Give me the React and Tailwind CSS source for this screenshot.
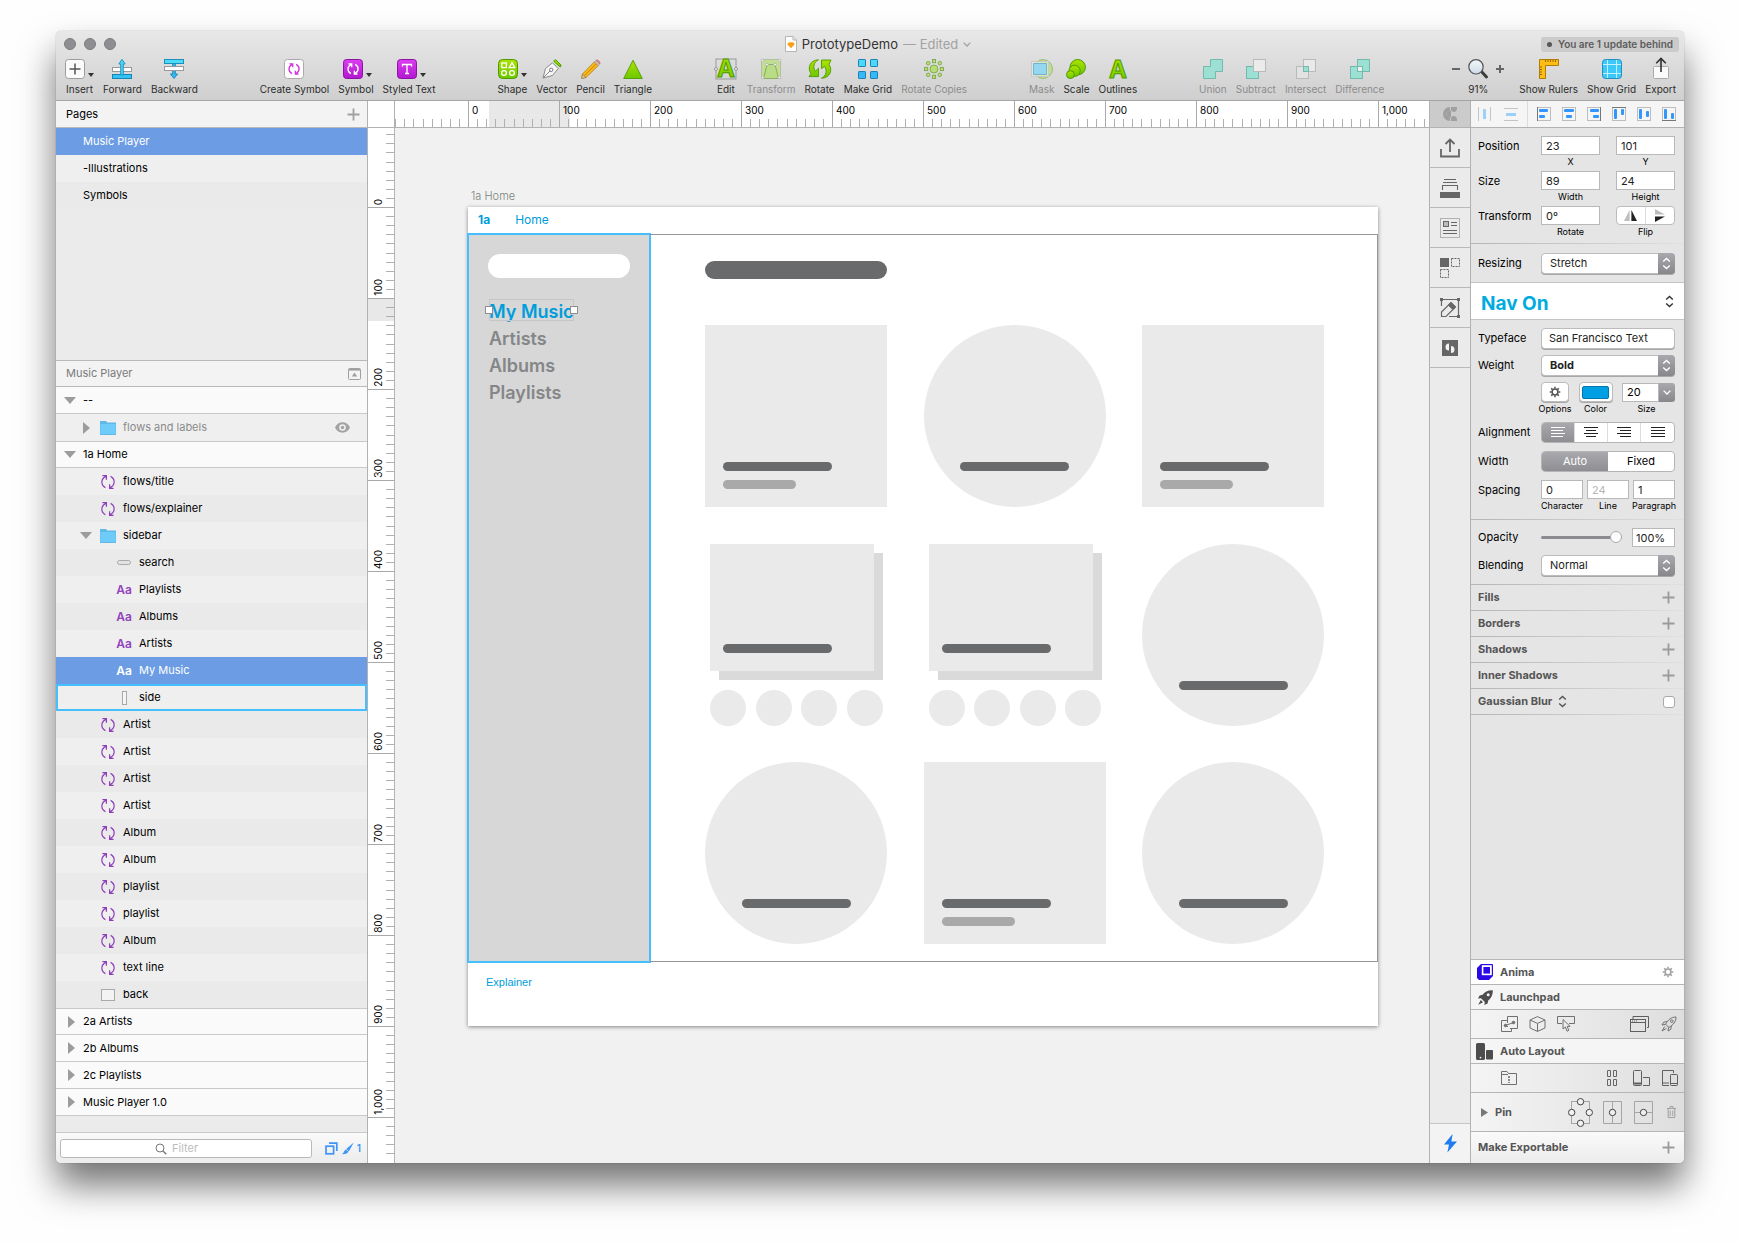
import React from "react";

/* ---------- small shared drawings ---------- */

function Cycle({ size = 14, color = "#8e3fb8", width = 1.2 }) {
  return (
    <svg width={size} height={size} viewBox="0 0 14 14" fill="none" stroke={color} strokeWidth={width} aria-hidden="true">
      <path d="M4.4 12.6C-.4 10 -.4 4 4.8 1.4M1.4 .7H5.4V4.8" />
      <path d="M9.6 1.4C14.4 4 14.4 10 9.2 12.6M12.6 13.3H8.6V9.2" />
    </svg>
  );
}

function Plus({ color = "#9b9b9b", size = 13 }) {
  return (
    <svg width={size} height={size} viewBox="0 0 13 13" aria-hidden="true">
      <path d="M6.5 .5V12.5M.5 6.5H12.5" stroke={color} strokeWidth="1.8" />
    </svg>
  );
}

function UpDown({ color = "#fff" }) {
  return (
    <svg width="9" height="13" viewBox="0 0 9 13" fill="none" stroke={color} strokeWidth="1.4" aria-hidden="true">
      <path d="M1.2 4.6L4.5 1.4L7.8 4.6M1.2 8.4L4.5 11.6L7.8 8.4" />
    </svg>
  );
}

function Gear({ color, size = 13 }) {
  return (
    <svg width={size} height={size} viewBox="0 0 14 14" fill="none" stroke={color} aria-hidden="true">
      <circle cx="7" cy="7" r="3.4" strokeWidth="1.8" />
      <path strokeWidth="1.8" d="M7 .8V3M7 11V13.2M.8 7H3M11 7H13.2M2.6 2.6L4.2 4.2M9.8 9.8L11.4 11.4M11.4 2.6L9.8 4.2M4.2 9.8L2.6 11.4" />
    </svg>
  );
}

function Svg({ children, w = 20, h = 20 }) {
  return (
    <svg width={w} height={h} viewBox={`0 0 ${w} ${h}`} className="shrink-0 overflow-visible" fill="none" aria-hidden="true">
      {children}
    </svg>
  );
}

/* ---------- toolbar icons ---------- */

const G = "url(#lime)";
const GS = "#4f9a00";

const insertIcon = (
  <Svg>
    <rect x=".5" y=".5" width="19" height="19" rx="3" fill="#fbfbfb" stroke="#9c9c9c" />
    <path d="M10 4.5V15.5M4.5 10H15.5" stroke="#555" strokeWidth="1.5" />
  </Svg>
);
const forwardIcon = (
  <Svg>
    <rect x=".5" y="8.5" width="19" height="4" fill="#fff" stroke="#999" />
    <rect x=".5" y="15.5" width="19" height="4" fill="#33c3f5" stroke="#1585b5" />
    <path d="M10 .3L13.2 5H11.3V16H8.7V5H6.8Z" fill="#4ad4f8" stroke="#1d8fbd" strokeWidth=".9" />
  </Svg>
);
const backwardIcon = (
  <Svg>
    <path d="M8.7 4V15H6.4L10 19.5L13.6 15H11.3V4Z" fill="#33b9f2" stroke="#1585b5" strokeWidth=".9" />
    <rect x=".5" y=".5" width="19" height="4" fill="#4adcf8" stroke="#1d8fbd" />
    <rect x=".5" y="7.5" width="19" height="4" fill="#fff" stroke="#999" />
  </Svg>
);
const symbolGlyph = (c) => (
  <g transform="translate(4.3 4.3) scale(.82)" stroke={c} strokeWidth="1.6">
    <path d="M4.4 12.6C-.4 10 -.4 4 4.8 1.4M1.4 .7H5.4V4.8" />
    <path d="M9.6 1.4C14.4 4 14.4 10 9.2 12.6M12.6 13.3H8.6V9.2" />
  </g>
);
const createSymbolIcon = (
  <Svg>
    <rect x=".5" y=".5" width="19" height="19" rx="3" fill="#fff" stroke="#aaa" />
    {symbolGlyph("#d333e0")}
  </Svg>
);
const symbolIcon = (
  <Svg>
    <rect x=".5" y=".5" width="19" height="19" rx="3" fill="url(#magenta)" stroke="#8d12a3" />
    {symbolGlyph("#fff")}
  </Svg>
);
const styledTextIcon = (
  <Svg>
    <rect x=".5" y=".5" width="19" height="19" rx="3" fill="url(#magenta)" stroke="#8d12a3" />
    <path d="M5.5 7.5V5.5H14.5V7.5M10 5.5V14.5M8 14.5H12" stroke="#fff" strokeWidth="1.3" />
  </Svg>
);
const shapeIcon = (
  <Svg>
    <rect x=".5" y=".5" width="19" height="19" rx="4" fill={G} stroke={GS} />
    <g stroke="#fff" strokeWidth="1.3">
      <rect x="3.8" y="4" width="4.6" height="4.6" />
      <path d="M14 3.6L16.8 8.6H11.2Z" />
      <circle cx="6" cy="14" r="2.4" />
      <circle cx="14" cy="14" r="2.4" />
    </g>
  </Svg>
);
const vectorIcon = (
  <Svg>
    <path d="M1 19L3.5 9.5L10.5 3.8L16.2 9.5L10.5 16.5Z" fill="#f6f6f6" stroke="#8a8a8a" />
    <path d="M1 19L8.3 11.7" stroke="#8a8a8a" />
    <circle cx="9.2" cy="10.8" r="1.7" fill="#fff" stroke="#777" />
    <path d="M12 1.6L13.8 .8L19.2 6.2L18.2 8L12 2.6Z" fill={G} stroke={GS} />
  </Svg>
);
const pencilIcon = (
  <Svg>
    <path d="M1.5 15L13.5 2.8L17.2 6.5L5 18.5L.8 19.2Z" fill="#fbbd1c" stroke="#a8770e" strokeWidth=".8" />
    <path d="M3.4 16.6L15.4 4.6" stroke="#d98f06" strokeWidth="1.2" />
    <path d="M1.4 15.2L5 18.5L.6 19.4Z" fill="#e9c79a" stroke="#8a6a3a" strokeWidth=".6" />
    <path d="M13.5 2.8L15 1.3L18.7 5L17.2 6.5Z" fill="#c9c9c9" stroke="#888" strokeWidth=".5" />
    <path d="M15 1.3C16.5 -.2 20.2 3.2 18.7 5Z" fill="#f08b8b" stroke="#b56262" strokeWidth=".6" />
  </Svg>
);
const triangleIcon = (
  <Svg>
    <path d="M10 1.2L19.3 19.5H.7Z" fill={G} stroke={GS} strokeWidth=".9" />
  </Svg>
);
function LetterA({ x = 10 }) {
  return (
    <text x={x} y="19" textAnchor="middle" fontFamily="Inter, sans-serif" fontWeight="700" fontSize="24" fill={G} stroke={GS} strokeWidth="1">
      A
    </text>
  );
}
const editIcon = (
  <Svg w={24} h={22}>
    <rect x="2" y="1" width="20" height="20" stroke="#9a9a9a" />
    <LetterA x={12} />
    <circle cx="2" cy="11" r="1.5" fill="#eee" stroke="#999" />
    <circle cx="22" cy="11" r="1.5" fill="#eee" stroke="#999" />
  </Svg>
);
const transformIcon = (
  <Svg>
    <rect x=".5" y=".5" width="19" height="19" fill="#c0df92" stroke="#b5bfa6" />
    <path d="M6 5.5H14L17.5 19.5H2.5Z" fill="#b9dd84" stroke="#8fac63" />
    <g fill="#f4f4f4" stroke="#b0b0b0" strokeWidth=".8">
      <circle cx="1.4" cy="1.4" r="1.3" />
      <circle cx="18.6" cy="1.4" r="1.3" />
      <circle cx="6" cy="5.5" r="1.3" />
      <circle cx="14" cy="5.5" r="1.3" />
      <circle cx="1.6" cy="18.6" r="1.3" />
      <circle cx="18.4" cy="18.6" r="1.3" />
    </g>
  </Svg>
);
const rotateIcon = (
  <Svg w={24} h={20}>
    <path d="M10.5 .8C2 1 -1 9 3 14.6L1 17.6H10.5V9.2L7.4 12.2C4.6 8.5 5.6 3 10.5 .8Z" fill={G} stroke={GS} strokeWidth=".9" />
    <path d="M13.5 19.2C22 19 25 11 21 5.4L23 1H13.5V9.6L16.6 7.4C19.4 11.5 18.4 17 13.5 19.2Z" fill={G} stroke={GS} strokeWidth=".9" />
  </Svg>
);
const makeGridIcon = (
  <Svg>
    {[[0, 0], [12, 0], [0, 12], [12, 12]].map(([x, y]) => (
      <rect key={`${x}-${y}`} x={x + 0.5} y={y + 0.5} width="7" height="7" rx=".6" fill={y ? "#35b8f5" : "#4cd8fa"} stroke="#1b82b3" />
    ))}
  </Svg>
);
const rotateCopiesIcon = (
  <Svg>
    <g fill="#b5de74" stroke="#7fa64a" strokeWidth=".9">
      <circle cx="10" cy="10" r="4" />
      <rect x="8.4" y=".5" width="3.2" height="3.2" />
      <rect x="8.4" y="16.3" width="3.2" height="3.2" />
      <rect x=".5" y="8.4" width="3.2" height="3.2" />
      <rect x="16.3" y="8.4" width="3.2" height="3.2" />
      <circle cx="4.2" cy="4.2" r="1.8" />
      <circle cx="15.8" cy="4.2" r="1.8" />
      <circle cx="4.2" cy="15.8" r="1.8" />
      <circle cx="15.8" cy="15.8" r="1.8" />
    </g>
  </Svg>
);
const maskIcon = (
  <Svg w={22} h={20}>
    <circle cx="12" cy="10" r="9.4" fill="#bfe08c" stroke="#9dbb72" />
    <rect x=".5" y="2.5" width="17" height="15" stroke="#c9c9c9" fill="#f0f0f0" fillOpacity=".5" />
    <rect x="2.5" y="4.5" width="13" height="11" fill="#93d8f0" stroke="#74b4cf" />
  </Svg>
);
const scaleIcon = (
  <Svg>
    <g fill={G} stroke={GS}>
      <circle cx="11.7" cy="8.2" r="7.7" />
      <circle cx="8.6" cy="11.8" r="5.6" />
      <circle cx="4.4" cy="15.6" r="3.9" />
    </g>
  </Svg>
);
const outlinesIcon = (
  <Svg>
    <LetterA />
  </Svg>
);
const M = "#9be0d3";
const MS = "#74b9ac";
const unionIcon = (
  <Svg>
    <path d="M7.5 .5H19.5V12.5H12.5V19.5H.5V7.5H7.5Z" fill={M} stroke={MS} />
  </Svg>
);
const subtractIcon = (
  <Svg>
    <rect x=".5" y="7.5" width="12" height="12" fill={M} stroke={MS} />
    <rect x="7.5" y=".5" width="12" height="12" fill="#ebebeb" stroke="#bababa" />
  </Svg>
);
const intersectIcon = (
  <Svg>
    <rect x="7.5" y=".5" width="12" height="12" fill="#e9e9e9" stroke="#bababa" />
    <rect x=".5" y="7.5" width="12" height="12" fill="#e2e2e2" stroke="#bababa" />
    <rect x="7.5" y="7.5" width="5" height="5" fill={M} stroke={MS} />
  </Svg>
);
const differenceIcon = (
  <Svg>
    <rect x="7.5" y=".5" width="12" height="12" fill={M} stroke={MS} />
    <rect x=".5" y="7.5" width="12" height="12" fill={M} stroke={MS} />
    <rect x="7.5" y="7.5" width="5" height="5" fill="#e9f3f1" stroke={MS} />
  </Svg>
);
const zoomIcon = (
  <Svg w={52} h={20}>
    <path d="M0 10H8M44 10H52M48 6V14" stroke="#666" strokeWidth="2" />
    <path d="M29 12L34.5 18" stroke="#3c3c3c" strokeWidth="3" strokeLinecap="round" />
    <circle cx="24" cy="7.8" r="7.2" fill="url(#lens)" stroke="#555" strokeWidth="1.2" />
  </Svg>
);
const rulersIcon = (
  <Svg>
    <path d="M.5 .5H19.5V6.5H6.5V19.5H.5Z" fill="#fdbd12" stroke="#b07c08" />
    <path d="M6.5 1V3M9 1V3M11.5 1V3M14 1V3M16.5 1V3M1 8H3M1 10.5H3M1 13H3M1 15.5H3" stroke="#8a5f00" strokeWidth=".9" />
  </Svg>
);
const showGridIcon = (
  <Svg>
    <rect x=".5" y=".5" width="19" height="19" rx="3" fill="#3cc8f8" stroke="#2391bf" />
    <path d="M5.5 1V19M14.5 1V19M1 5.5H19M1 14.5H19" stroke="#c4f0ff" />
  </Svg>
);
const exportIcon = (
  <Svg w={20} h={22}>
    <rect x="2.5" y="8.5" width="15" height="12" rx="1" fill="#fafafa" stroke="#aaa" />
    <path d="M10 14V1M5.2 5.2L10 .4L14.8 5.2" stroke="#333" strokeWidth="1.6" />
  </Svg>
);

const toolGroups = [
  [
    { label: "Insert", icon: insertIcon, menu: true },
    { label: "Forward", icon: forwardIcon },
    { label: "Backward", icon: backwardIcon },
  ],
  [
    { label: "Create Symbol", icon: createSymbolIcon },
    { label: "Symbol", icon: symbolIcon, menu: true },
    { label: "Styled Text", icon: styledTextIcon, menu: true },
  ],
  [
    { label: "Shape", icon: shapeIcon, menu: true },
    { label: "Vector", icon: vectorIcon },
    { label: "Pencil", icon: pencilIcon },
    { label: "Triangle", icon: triangleIcon },
  ],
  [
    { label: "Edit", icon: editIcon },
    { label: "Transform", icon: transformIcon, off: true },
    { label: "Rotate", icon: rotateIcon },
    { label: "Make Grid", icon: makeGridIcon },
    { label: "Rotate Copies", icon: rotateCopiesIcon, off: true },
  ],
  [
    { label: "Mask", icon: maskIcon, off: true },
    { label: "Scale", icon: scaleIcon },
    { label: "Outlines", icon: outlinesIcon },
  ],
  [
    { label: "Union", icon: unionIcon, off: true },
    { label: "Subtract", icon: subtractIcon, off: true },
    { label: "Intersect", icon: intersectIcon, off: true },
    { label: "Difference", icon: differenceIcon, off: true },
  ],
  [
    { label: "91%", icon: zoomIcon },
    { label: "Show Rulers", icon: rulersIcon, gap: true },
    { label: "Show Grid", icon: showGridIcon },
    { label: "Export", icon: exportIcon },
  ],
];

function Tool({ label, icon, menu, off, gap }) {
  return (
    <button type="button" disabled={off} className={`flex flex-col items-center ${gap ? "ml-[6px]" : ""} ${off ? "text-[#8c8c8c]" : "text-[#2c2c2c]"}`}>
      <span className={`flex h-5 items-center gap-[3px] ${menu && label !== "Insert" && label !== "Shape" ? "pl-1" : ""}`}>
        {icon}
        {menu && (
          <svg width="6" height="4" viewBox="0 0 6 4" className="mt-3" aria-hidden="true">
            <path d="M0 0H6L3 4Z" fill="#333" />
          </svg>
        )}
      </span>
      <span className="mt-[3px] whitespace-nowrap text-[10px] leading-[14px]">{label}</span>
    </button>
  );
}

function Toolbar() {
  return (
    <header className="border-b border-[#a5a5a5] bg-linear-to-b from-[#e8e8e8] to-[#cfcfcf]">
      <div className="grid h-[26px] grid-cols-[1fr_auto_1fr] items-center px-[5px]">
        <div className="flex gap-2 pl-[3px]">
          {["Close", "Minimise", "Zoom"].map((n) => (
            <button key={n} type="button" aria-label={n} className="size-3 rounded-full border border-[#7d7d80] bg-[#8e8e92]" />
          ))}
        </div>
        <h1 className="flex items-center gap-[5px] pl-4 text-[13px] leading-4 text-[#333]">
          <svg width="12" height="16" viewBox="0 0 12 16" aria-hidden="true">
            <path d="M.5 .5H8L11.5 4V15.5H.5Z" fill="#fff" stroke="#b5b5b5" />
            <path d="M8 .5V4H11.5" fill="#e5e5e5" stroke="#b5b5b5" />
            <path d="M3.8 6.2H8.2L9.8 8.2L6 12.2L2.2 8.2Z" fill="#f9a01b" />
          </svg>
          <span>PrototypeDemo</span>
          <span className="text-[#a2a2a2]">— Edited</span>
          <svg width="8" height="5" viewBox="0 0 8 5" fill="none" stroke="#a2a2a2" strokeWidth="1.3" aria-hidden="true">
            <path d="M.6 .6L4 4L7.4 .6" />
          </svg>
        </h1>
        <div className="flex justify-end">
          <span className="flex items-center gap-[6px] rounded-[3px] bg-[#cbcbcb] px-[6px] text-[10px] font-semibold leading-[15px] text-[#5c5c5c]">
            <i className="size-[5px] rounded-full bg-[#565656]" />
            You are 1 update behind
          </span>
        </div>
      </div>
      <div className="flex justify-between pb-1 pl-[9px] pr-2 pt-[2px]">
        {toolGroups.map((g, i) => (
          <div key={i} className={`flex gap-[9px] ${i === 6 ? "ml-[6px]" : ""}`}>
            {g.map((t) => (
              <Tool key={t.label} {...t} />
            ))}
          </div>
        ))}
      </div>
    </header>
  );
}

/* ---------- left panel ---------- */

const layers = [
  { t: "--", k: "board", open: true },
  { t: "flows and labels", k: "folder", open: false, muted: true, eye: true },
  { t: "1a Home", k: "board", open: true },
  { t: "flows/title", k: "symbol" },
  { t: "flows/explainer", k: "symbol" },
  { t: "sidebar", k: "folder", open: true },
  { t: "search", k: "pill" },
  { t: "Playlists", k: "text" },
  { t: "Albums", k: "text" },
  { t: "Artists", k: "text" },
  { t: "My Music", k: "text", selected: true },
  { t: "side", k: "bar", hover: true },
  { t: "Artist", k: "symbol" },
  { t: "Artist", k: "symbol" },
  { t: "Artist", k: "symbol" },
  { t: "Artist", k: "symbol" },
  { t: "Album", k: "symbol" },
  { t: "Album", k: "symbol" },
  { t: "playlist", k: "symbol" },
  { t: "playlist", k: "symbol" },
  { t: "Album", k: "symbol" },
  { t: "text line", k: "symbol" },
  { t: "back", k: "rect" },
  { t: "2a Artists", k: "board", open: false },
  { t: "2b Albums", k: "board", open: false },
  { t: "2c Playlists", k: "board", open: false },
  { t: "Music Player 1.0", k: "board", open: false },
];

function Disclosure({ open }) {
  return open ? (
    <svg width="12" height="7" viewBox="0 0 12 7" aria-hidden="true">
      <path d="M0 0H12L6 7Z" fill="#9c9c9c" />
    </svg>
  ) : (
    <svg width="7" height="12" viewBox="0 0 7 12" aria-hidden="true">
      <path d="M0 0L7 6L0 12Z" fill="#9c9c9c" />
    </svg>
  );
}

function LayerIcon({ k, selected }) {
  if (k === "symbol") return <Cycle />;
  if (k === "text")
    return <span className={`text-[12px] font-semibold ${selected ? "text-white" : "text-[#9243bd]"}`}>Aa</span>;
  if (k === "folder")
    return (
      <svg width="16" height="14" viewBox="0 0 16 14" aria-hidden="true">
        <path d="M0 0H6L7 1.6H16V14H0Z" fill="#5fb9e8" />
        <path d="M.5 3H15.5V13H.5Z" fill="#6ecbfa" />
      </svg>
    );
  if (k === "pill") return <i className="h-[5px] w-[14px] rounded-full border border-[#a9a9a9] bg-[#e2e2e2]" />;
  if (k === "bar") return <i className="h-[14px] w-[5px] border border-[#a9a9a9] bg-[#f5f5f5]" />;
  return <i className="h-3 w-[14px] border border-[#a9a9a9] bg-[#f3f3f3]" />;
}

function LayerRow({ layer, index }) {
  const { t, k, open, muted, eye, selected, hover } = layer;
  const board = k === "board";
  const deep = k === "text" || k === "pill" || k === "bar";
  let look = index % 2 ? "bg-[#efefef]" : "bg-[#eaeaea]";
  if (board) look = index === 0 || index > 23 ? "bg-[#fafafa] border-b border-[#c9c9c9]" : "bg-[#fafafa] border-y border-[#c9c9c9]";
  if (selected) look = "bg-[#6b9ce4] text-white";
  if (hover) look = "bg-[#efefef] outline-2 -outline-offset-2 outline-[#46bfff]";
  return (
    <li>
      <button type="button" className={`flex h-[27px] w-full items-center text-left text-[11px] ${look} ${muted ? "text-[#8b8b8b]" : ""}`}>
        {board ? (
          <span className={`flex w-[27px] justify-center ${open ? "" : "pl-[3px]"}`}>
            <Disclosure open={open} />
          </span>
        ) : (
          <>
            <span className={`flex justify-end ${open ? "pr-[6px]" : "pr-2"} ${deep ? "w-[58px]" : "w-[42px]"}`}>
              {k === "folder" && <Disclosure open={open} />}
            </span>
            <span className="mr-[5px] flex w-5 justify-center">
              <LayerIcon k={k} selected={selected} />
            </span>
          </>
        )}
        <span className="grow">{t}</span>
        {eye && (
          <svg width="15" height="11" viewBox="0 0 15 11" className="mr-[17px]" aria-hidden="true">
            <path d="M0 5.5C3-1.4 12-1.4 15 5.5C12 12.4 3 12.4 0 5.5Z" fill="#a3a3a3" />
            <circle cx="7.5" cy="5.5" r="3.3" fill="#efefef" />
            <circle cx="7.5" cy="5.5" r="1.7" fill="#a3a3a3" />
          </svg>
        )}
      </button>
    </li>
  );
}

function LeftPanel() {
  return (
    <aside className="flex w-[312px] shrink-0 flex-col border-r border-[#b2b2b2] bg-[#ebebeb] text-[11px] text-black">
      <div className="flex h-[27px] items-center justify-between border-b border-[#b9b9b9] bg-[#f3f3f3] pl-[10px] pr-[7px]">
        <h2>Pages</h2>
        <button type="button" aria-label="Add page">
          <Plus color="#a0a0a0" />
        </button>
      </div>
      <ul className="h-[232px]">
        <li>
          <button type="button" className="h-[27px] w-full bg-[#6b9ce4] pl-[27px] text-left text-white">Music Player</button>
        </li>
        <li>
          <button type="button" className="h-[27px] w-full bg-[#efefef] pl-[27px] text-left">-Illustrations</button>
        </li>
        <li>
          <button type="button" className="h-[27px] w-full bg-[#eaeaea] pl-[27px] text-left">Symbols</button>
        </li>
      </ul>
      <div className="flex h-[27px] items-center justify-between border-y border-[#b9b9b9] bg-[#f3f3f3] pl-[10px] pr-[6px] text-[#7a7a7a]">
        <h2>Music Player</h2>
        <button type="button" aria-label="Collapse layers">
          <svg width="13" height="12" viewBox="0 0 13 12" fill="none" aria-hidden="true">
            <rect x=".5" y=".5" width="12" height="11" rx="1" stroke="#a0a0a0" />
            <path d="M1 1.8H12" stroke="#a0a0a0" strokeWidth="1.6" />
            <path d="M6.5 4.6L9.2 8.6H3.8Z" fill="#a0a0a0" />
          </svg>
        </button>
      </div>
      <ul className="pb-4">
        {layers.map((l, i) => (
          <LayerRow key={i} layer={l} index={i} />
        ))}
      </ul>
      <div className="mt-auto flex h-[31px] items-center border-t border-[#c9c9c9] bg-linear-to-b from-[#fafafa] to-[#ececec] pl-1 pr-[6px]">
        <label className="relative block w-[252px]">
          <span className="sr-only">Filter layers</span>
          <svg width="12" height="12" viewBox="0 0 12 12" fill="none" stroke="#777" className="absolute left-[95px] top-1" aria-hidden="true">
            <circle cx="5" cy="5" r="4" />
            <path d="M8 8L11.3 11.3" strokeWidth="1.4" />
          </svg>
          <input type="text" placeholder="Filter" className="h-[19px] w-full rounded-[3px] border border-[#b9b9b9] bg-white pl-[111px] text-[11px] placeholder:text-[#bdbdbd]" />
        </label>
        <div className="ml-auto flex items-center gap-1 text-[#3f94f7]">
          <button type="button" aria-label="Show slices">
            <svg width="13" height="13" viewBox="0 0 13 13" fill="none" stroke="#3f94f7" strokeWidth="1.7" aria-hidden="true">
              <rect x="1" y="4.2" width="7.6" height="7.6" />
              <path d="M4 1.2H11.8V9" />
            </svg>
          </button>
          <button type="button" aria-label="Show pixels" className="flex items-center gap-[3px] text-[10px] font-semibold">
            <svg width="12" height="13" viewBox="0 0 12 13" aria-hidden="true">
              <path d="M11.8 .4L4.2 7L6.8 9.4ZM3.8 7.4L6.4 9.8C5 12 2.4 12.4 0 12.2C1.8 11.2 2 8.4 3.8 7.4Z" fill="#3f94f7" />
            </svg>
            1
          </button>
        </div>
      </div>
    </aside>
  );
}

/* ---------- rulers ---------- */

const steps = [1, 2, 3, 4, 5, 6, 7, 8, 9];
const marks = ["0", "100", "200", "300", "400", "500", "600", "700", "800", "900", "1,000"];

function HSegment({ label }) {
  return (
    <div className="relative flex h-[26px] w-[91px] shrink-0 flex-col justify-between border-l border-[#a9a9a9] pl-[3px] pt-[2px]">
      <span className="text-[10px] leading-[14px] text-black">{label}</span>
      <svg width="91" height="8" className="absolute -left-px bottom-0" aria-hidden="true">
        {steps.map((s) => (
          <rect key={s} x={Math.round(s * 9.1)} y="0" width="1" height="8" fill="#b0b0b0" />
        ))}
      </svg>
    </div>
  );
}

function VSegment({ label }) {
  return (
    <div className="relative flex h-[91px] w-[26px] shrink-0 flex-col justify-end border-b border-[#a9a9a9] pb-[2px] pl-[3px]">
      <span className="w-[14px] rotate-180 text-[10px] leading-[14px] text-black [writing-mode:vertical-rl]">{label}</span>
      <svg width="8" height="91" className="absolute -bottom-px right-0" aria-hidden="true">
        {steps.map((s) => (
          <rect key={s} x="0" y={Math.round(s * 9.1) - 1} width="8" height="1" fill="#b0b0b0" />
        ))}
      </svg>
    </div>
  );
}

function TopRuler() {
  return (
    <div className="flex h-[27px] shrink-0 border-b border-[#b2b2b2] bg-white">
      <div className="w-[27px] shrink-0 border-r border-[#b2b2b2]" />
      <div className="relative flex min-w-0 grow overflow-hidden">
        <div className="absolute left-[94px] top-0 h-full w-[81px] bg-[#e8e8e8]" />
        <div className="flex w-[73px] shrink-0 justify-end overflow-hidden">
          <HSegment />
        </div>
        {marks.map((m) => (
          <HSegment key={m} label={m} />
        ))}
      </div>
    </div>
  );
}

function SideRuler() {
  return (
    <div className="relative w-[27px] shrink-0 border-r border-[#b2b2b2] bg-white">
      <div className="absolute inset-0 flex flex-col overflow-hidden">
        <div className="absolute left-0 top-[171px] h-[22px] w-full bg-[#e8e8e8]" />
        <div className="flex h-20 shrink-0 flex-col justify-end overflow-hidden">
          <VSegment label="0" />
        </div>
        {marks.slice(1).map((m) => (
          <VSegment key={m} label={m} />
        ))}
        <VSegment />
      </div>
    </div>
  );
}

/* ---------- artboard ---------- */

const Line = () => <div className="h-[9px] w-[109px] rounded-full bg-[#696a6c]" />;

function AlbumCard() {
  return (
    <div className="flex size-[182px] flex-col justify-end gap-[9px] bg-[#eaeaea] p-[18px]">
      <Line />
      <div className="h-[9px] w-[73px] rounded-full bg-[#a9a9a9]" />
    </div>
  );
}

function ArtistCard() {
  return (
    <div className="flex size-[182px] flex-col items-center justify-end rounded-full bg-[#eaeaea] pb-9">
      <Line />
    </div>
  );
}

function PlaylistCard() {
  return (
    <div className="flex size-[182px] flex-col justify-between pl-[5px] pr-1">
      <div className="relative h-[136px]">
        <div className="absolute bottom-0 right-0 h-[127px] w-[164px] bg-[#dadada]" />
        <div className="absolute left-0 top-0 flex h-[127px] w-[164px] items-end bg-[#eaeaea] pb-[18px] pl-[13px]">
          <Line />
        </div>
      </div>
      <div className="flex justify-between">
        {[0, 1, 2, 3].map((i) => (
          <div key={i} className="size-9 rounded-full bg-[#eaeaea]" />
        ))}
      </div>
    </div>
  );
}

function Canvas() {
  return (
    <main className="min-w-0 grow overflow-hidden bg-[#f1f1f1] pl-[73px] pt-[59px]">
      <p className="pb-px pl-[3px] text-[11px] font-light leading-[19px] text-[#7c857c]">1a Home</p>
      <section className="w-[910px] bg-white shadow-[0_1px_4px_rgba(0,0,0,0.45)]">
        <div className="flex h-[27px] items-center gap-[25px] pb-px pl-[10px] text-[12px] text-[#009ddc]">
          <b className="font-bold">1a</b>
          <span>Home</span>
        </div>
        <div className="flex h-[728px]">
          <div className="w-[182px] shrink-0 bg-[#d7d7d7] px-5 pt-5 outline-2 -outline-offset-1 outline-[#46bfff]">
            <div className="h-6 w-[142px] rounded-full bg-white" />
            <nav className="mt-5 flex flex-col items-start pl-px text-[18px] font-semibold leading-[27px] text-[#858688]">
              <span className="relative text-[#009ddc]">
                My Music
                <i className="absolute inset-x-0 bottom-1 top-px border border-[#c6c6c6]" />
                <i className="absolute -left-1 top-2 size-[8px] border border-[#8f8f8f] bg-white" />
                <i className="absolute -right-1 top-2 size-[8px] border border-[#8f8f8f] bg-white" />
              </span>
              <span>Artists</span>
              <span>Albums</span>
              <span>Playlists</span>
            </nav>
          </div>
          <div className="grow border border-l-0 border-[#969696] pl-[55px] pr-[53px] pt-[26px]">
            <div className="h-[18px] w-[182px] rounded-full bg-[#696a6c]" />
            <div className="mt-[46px] grid h-[619px] grid-cols-[auto_auto_auto] content-between justify-between">
              <AlbumCard />
              <ArtistCard />
              <AlbumCard />
              <PlaylistCard />
              <PlaylistCard />
              <ArtistCard />
              <ArtistCard />
              <AlbumCard />
              <ArtistCard />
            </div>
          </div>
        </div>
        <p className="h-16 pl-[18px] pt-[13px] font-['Liberation_Sans',sans-serif] text-[11px] leading-[14px] text-[#009ddc]">Explainer</p>
      </section>
    </main>
  );
}

/* ---------- plugin strip ---------- */

const strip = [
  { n: "Export", d: <path d="M1 11V18.5H19V11M10 14V1.5M5.5 6L10 1.5L14.5 6" strokeWidth="1.8" /> },
  {
    n: "Stack",
    d: (
      <>
        <path d="M4 1.5H16M3 4.5H17M2.5 12V7.5H17.5V12" strokeWidth="1.1" />
        <rect x="0" y="14" width="20" height="6" fill="#666" stroke="none" />
      </>
    ),
  },
  {
    n: "List",
    d: (
      <>
        <rect x=".5" y=".5" width="19" height="19" strokeDasharray="1 1" stroke="#777" />
        <rect x="3.5" y="3.5" width="5" height="5" fill="#bbb" />
        <path d="M11 4.5H17M11 7.5H17M3 12.5H17M3 15.5H17" />
      </>
    ),
  },
  {
    n: "Boxes",
    d: (
      <>
        <rect x="0" y="0" width="9" height="9" fill="#666" stroke="none" />
        <rect x="11.5" y=".5" width="8" height="8" strokeDasharray="2 1" />
        <rect x=".5" y="11.5" width="8" height="8" strokeDasharray="2 1" />
      </>
    ),
  },
  {
    n: "Edit path",
    d: (
      <>
        <path d="M1.5 1.5H18.5V18.5H9M1.5 1.5V8" strokeWidth="1.2" />
        <rect x="0" y="0" width="3" height="3" fill="#666" stroke="none" />
        <rect x="17" y="0" width="3" height="3" fill="#666" stroke="none" />
        <rect x="17" y="17" width="3" height="3" fill="#666" stroke="none" />
        <path d="M1.5 18.5V14L11 4.5L15.5 9L6 18.5Z" strokeWidth="1.2" />
        <path d="M8.4 7.2L11 4.5L15.5 9L12.8 11.6Z" fill="#666" />
      </>
    ),
  },
  {
    n: "Plugin",
    d: (
      <>
        <rect x="2" y="2" width="16" height="16" fill="#666" stroke="none" />
        <path d="M9 5.5A3.5 3.5 0 0 0 9 12.5ZM11 8A3.5 3.5 0 0 1 11 15Z" fill="#f2f2f2" stroke="none" />
      </>
    ),
  },
];

function Strip() {
  return (
    <div className="flex w-[42px] shrink-0 flex-col border-x border-[#b2b2b2] bg-[#ebebeb]">
      <button type="button" aria-label="Craft" className="flex h-[27px] items-center justify-center border-b border-[#b2b2b2] bg-[#cbcbcb]">
        <svg width="15" height="14" viewBox="0 0 15 14" fill="#a0a0a0" aria-hidden="true">
          <path d="M7 0A7 7 0 0 0 7 14V10.4A3.4 3.4 0 0 1 7 3.6ZM8 0H14V1.4C14 4.2 11 6.4 8 3.6ZM8 10.4C11 7.6 14 9.8 14 12.6V14H8Z" />
          <path d="M4 3.6H8V10.4H4Z" />
        </svg>
      </button>
      {strip.map((s) => (
        <button key={s.n} type="button" aria-label={s.n} className="flex h-10 items-center justify-center border-b border-[#b9b9b9]">
          <svg width="20" height="20" viewBox="0 0 20 20" fill="none" stroke="#666" aria-hidden="true">
            {s.d}
          </svg>
        </button>
      ))}
      <button type="button" aria-label="Quick actions" className="mt-auto flex h-10 items-center justify-center border-t border-[#c6c6c6] bg-[#f3f3f3]">
        <svg width="13" height="19" viewBox="0 0 13 19" aria-hidden="true">
          <path d="M8.6 0L0 10.6H5L3.4 18.6L13 7.4H7.4Z" fill="#1f7bf0" />
        </svg>
      </button>
    </div>
  );
}

/* ---------- inspector ---------- */

const alignIcons = [
  { n: "Align left", e: "M.5 0V14", r: [[2, 2, 9, 3], [2, 8, 6, 3]] },
  { n: "Align centre", e: "", r: [[2, 2, 10, 3], [4, 8, 6, 3]] },
  { n: "Align right", e: "M13.5 0V14", r: [[3, 2, 9, 3], [6, 8, 6, 3]] },
  { n: "Align top", e: "M0 .5H14", r: [[2, 2, 3, 10], [9, 2, 3, 6]] },
  { n: "Align middle", e: "", r: [[2, 2, 3, 10], [9, 4, 3, 6]] },
  { n: "Align bottom", e: "M0 13.5H14", r: [[2, 2, 3, 10], [9, 6, 3, 6]] },
];

function AlignBar() {
  return (
    <div className="flex h-[27px] items-center border-b border-[#b2b2b2] bg-[#f5f5f5] pl-[7px] pr-2">
      <button type="button" aria-label="Distribute horizontally">
        <svg width="13" height="14" viewBox="0 0 13 14" aria-hidden="true">
          <path d="M.5 0V14M12.5 0V14" stroke="#c4c4c4" />
          <rect x="5" y="2" width="3" height="10" rx=".5" fill="#9bd0fa" />
        </svg>
      </button>
      <button type="button" aria-label="Distribute vertically" className="ml-[13px]">
        <svg width="14" height="13" viewBox="0 0 14 13" aria-hidden="true">
          <path d="M0 .5H14M0 12.5H14" stroke="#c4c4c4" />
          <rect x="2" y="5" width="10" height="3" rx=".5" fill="#9bd0fa" />
        </svg>
      </button>
      <div className="ml-[9px] h-full w-px bg-[#dcdcdc]" />
      <div className="flex grow justify-between pl-[9px]">
        {alignIcons.map((a) => (
          <button key={a.n} type="button" aria-label={a.n}>
            <svg width="14" height="14" viewBox="0 0 14 14" fill="none" aria-hidden="true">
              <rect x=".5" y=".5" width="13" height="13" stroke="#bdbdbd" />
              <path d={a.e} stroke="#777" />
              {a.r.map(([x, y, w, h]) => (
                <rect key={`${x}-${y}`} x={x} y={y} width={w} height={h} rx="1" fill="#3396fb" />
              ))}
            </svg>
          </button>
        ))}
      </div>
    </div>
  );
}

const fieldBox = "h-[19px] w-full border border-[#b8b8b8] bg-white pl-1 text-[11px] leading-[17px] text-[#222]";

function Field({ label, value, muted, className = "" }) {
  return (
    <label className={`flex flex-col items-center ${className}`}>
      <input type="text" defaultValue={value} className={`${fieldBox} ${muted ? "text-[#b5b5b5]!" : ""}`} />
      <span className="text-[9px] leading-[14px]">{label}</span>
    </label>
  );
}

function Picker({ id, value, bold, plain }) {
  return (
    <div className="relative w-[134px]">
      <select id={id} className={`block h-[21px] w-full appearance-none rounded-[4px] border border-[#bcbcbc] bg-white text-[11px] text-[#222] shadow-[0_1px_0_#a8a8a8] ${plain ? "pl-[7px]" : "pl-2"} ${bold ? "font-bold" : ""}`}>
        <option>{value}</option>
      </select>
      {!plain && (
        <span className="pointer-events-none absolute inset-y-0 right-0 flex w-[17px] items-center justify-center rounded-r-[4px] bg-linear-to-b from-[#a9a9ad] to-[#88888c]">
          <UpDown />
        </span>
      )}
    </div>
  );
}

const rowCls = "flex justify-between pl-[7px] pr-[9px]";
const fade = "h-px bg-linear-to-r from-[#b5b5b5] to-[#e0e0e0]";

function AlignLines({ color, rows }) {
  return (
    <svg width="14" height="11" viewBox="0 0 14 11" aria-hidden="true">
      {rows.map(([x, w], i) => (
        <rect key={i} x={x} y={i * 3} width={w} height="1" fill={color} />
      ))}
    </svg>
  );
}

function TypePanel() {
  return (
    <div className="pb-[6px] pt-2">
      <div className={`${rowCls} items-start`}>
        <label htmlFor="typeface" className="leading-5">Typeface</label>
        <Picker id="typeface" value="San Francisco Text" plain />
      </div>
      <div className={`${rowCls} mt-[6px] items-start`}>
        <label htmlFor="weight" className="leading-5">Weight</label>
        <Picker id="weight" value="Bold" bold />
      </div>
      <div className={`${rowCls} mt-[6px] justify-end!`}>
        <div className="flex w-[138px] justify-between">
          <button type="button" className="flex w-9 flex-col items-center text-[9px]">
            <span className="flex h-5 w-7 items-center justify-center rounded-[4px] border border-[#bcbcbc] bg-white shadow-[0_1px_0_#a8a8a8]">
              <Gear color="#555" size={12} />
            </span>
            <span className="leading-[14px]">Options</span>
          </button>
          <button type="button" className="mr-1 flex flex-col items-center text-[9px]">
            <span className="flex h-5 w-[34px] items-center justify-center rounded-[4px] border border-[#bcbcbc] bg-white shadow-[0_1px_0_#a8a8a8]">
              <span className="h-[13px] w-[27px] rounded-[2px] border border-[#0078ab] bg-[#009fe3]" />
            </span>
            <span className="leading-[14px]">Color</span>
          </button>
          <label className="flex flex-col items-center pt-px">
            <span className="flex h-[19px] w-[53px]">
              <input type="text" defaultValue="20" className="w-[37px] border border-[#b8b8b8] bg-white pl-1 text-[11px]" />
              <span className="flex w-4 items-center justify-center rounded-r-[3px] bg-linear-to-b from-[#a9a9ad] to-[#88888c]">
                <svg width="8" height="5" viewBox="0 0 8 5" fill="none" stroke="#fff" strokeWidth="1.3" aria-hidden="true">
                  <path d="M.6 .6L4 4L7.4 .6" />
                </svg>
              </span>
            </span>
            <span className="pr-1 text-[9px] leading-[14px]">Size</span>
          </label>
        </div>
      </div>
      <div className={`${rowCls} mt-[6px] items-center`}>
        <span>Alignment</span>
        <div className="grid h-[21px] w-[134px] grid-cols-4 divide-x divide-[#dcdcdc] overflow-hidden rounded-[4px] border border-[#b5b5b5] bg-white">
          <button type="button" aria-label="Left" className="flex items-center justify-center bg-linear-to-b from-[#a9a9ad] to-[#8f8f93]">
            <AlignLines color="#fff" rows={[[0, 14], [0, 12], [0, 14], [0, 12]]} />
          </button>
          <button type="button" aria-label="Centre" className="flex items-center justify-center">
            <AlignLines color="#222" rows={[[0, 14], [2, 10], [0, 14], [2, 10]]} />
          </button>
          <button type="button" aria-label="Right" className="flex items-center justify-center">
            <AlignLines color="#222" rows={[[0, 14], [3, 11], [0, 14], [3, 11]]} />
          </button>
          <button type="button" aria-label="Justify" className="flex items-center justify-center">
            <AlignLines color="#222" rows={[[0, 14], [0, 14], [0, 14], [0, 14]]} />
          </button>
        </div>
      </div>
      <div className={`${rowCls} mt-2 items-center`}>
        <span>Width</span>
        <div className="grid h-[21px] w-[134px] grid-cols-2 overflow-hidden rounded-[4px] border border-[#b5b5b5] bg-white">
          <button type="button" className="bg-linear-to-b from-[#a9a9ad] to-[#8f8f93] text-white">Auto</button>
          <button type="button">Fixed</button>
        </div>
      </div>
      <div className={`${rowCls} mt-2 items-start`}>
        <span className="leading-5">Spacing</span>
        <div className="flex w-[134px] justify-between">
          <Field label="Character" value="0" className="w-[42px]" />
          <Field label="Line" value="24" muted className="w-[42px]" />
          <Field label="Paragraph" value="1" className="w-[42px]" />
        </div>
      </div>
    </div>
  );
}

function PluginIcons() {
  return (
    <>
      <div className="flex h-[29px] items-center border-t border-[#b5b5b5] bg-linear-to-r from-[#f4f4f4] to-[#dedede] pl-[30px] pr-[7px]">
        <div className="flex gap-[11px]">
          <button type="button" aria-label="Link">
            <svg width="17" height="16" viewBox="0 0 17 16" fill="none" stroke="#707070" aria-hidden="true">
              <path d="M6 4.5H.5V15.5H10.5V12M6.5 7V.5H16.5V12.5H9M6.5 10V11" />
              <path d="M4 9.5L13 6.5" />
              <circle cx="4.5" cy="9.5" r="1.3" fill="#707070" />
              <circle cx="12.5" cy="6.5" r="1.3" fill="#707070" />
            </svg>
          </button>
          <button type="button" aria-label="Component">
            <svg width="17" height="16" viewBox="0 0 17 16" fill="none" stroke="#707070" aria-hidden="true">
              <path d="M8.5 .6L16 4V12L8.5 15.4L1 12V4ZM1 4L8.5 7.4L16 4M8.5 7.4V15.4" />
            </svg>
          </button>
          <button type="button" aria-label="Hover state">
            <svg width="18" height="16" viewBox="0 0 18 16" fill="none" stroke="#707070" aria-hidden="true">
              <path d="M5 7.5H.5V.5H17.5V7.5H12" />
              <path d="M6 3.5V13L8.4 11L10 15.2L11.8 14.4L10.2 10.4H13.2Z" fill="#ececec" />
            </svg>
          </button>
        </div>
        <div className="ml-auto flex items-center gap-3">
          <button type="button" aria-label="Preview">
            <svg width="19" height="16" viewBox="0 0 19 16" fill="none" stroke="#5f5f5f" aria-hidden="true">
              <path d="M3 3V.5H18.5V11.5H17" />
              <rect x=".5" y="3.5" width="15" height="12" />
              <path d="M.5 6.5H15.5" />
              <path d="M2 5H8" strokeDasharray="1 1" />
            </svg>
          </button>
          <button type="button" aria-label="Launch">
            <svg width="16" height="16" viewBox="0 0 16 16" fill="none" stroke="#707070" aria-hidden="true">
              <path d="M15 1C10.5 1 7 3.6 4.6 8.2L7.8 11.4C12.4 9 15 5.5 15 1ZM6.2 5.6L2.6 6.2L1 9L4.6 8.4M10.4 9.8L9.8 13.4L7 15L7.6 11.4M3.6 10.6L1 15L5.4 12.4" />
              <circle cx="10.8" cy="5.2" r="1.3" />
            </svg>
          </button>
        </div>
      </div>
      <div className="flex h-[25px] items-center border-t border-[#b5b5b5] bg-[#f5f5f5] pl-[5px] font-bold text-[#555]">
        <svg width="17" height="17" viewBox="0 0 17 17" fill="#4d4d4d" aria-hidden="true">
          <path d="M1.5 0H7.5A1.5 1.5 0 0 1 9 1.5V15.5A1.5 1.5 0 0 1 7.5 17H1.5A1.5 1.5 0 0 1 0 15.5V1.5A1.5 1.5 0 0 1 1.5 0ZM11 7H16A1 1 0 0 1 17 8V15.5A1 1 0 0 1 16 16.5H11A1 1 0 0 1 10 15.5V8A1 1 0 0 1 11 7Z" />
          <circle cx="4.5" cy="14.6" r=".9" fill="#f5f5f5" />
        </svg>
        <span className="pl-[7px]">Auto Layout</span>
      </div>
      <div className="flex h-[29px] items-center border-t border-[#b5b5b5] bg-linear-to-r from-[#f4f4f4] to-[#dedede] pl-[30px] pr-[6px]">
        <button type="button" aria-label="Folder">
          <svg width="16" height="14" viewBox="0 0 16 14" fill="none" stroke="#707070" aria-hidden="true">
            <path d="M.5 13.5V.5H6L7.5 2.5H15.5V13.5ZM.5 3.5H7" />
            <path d="M8 5V12" strokeWidth="1.6" strokeDasharray="2 1" />
          </svg>
        </button>
        <div className="ml-auto flex items-center gap-3">
          <button type="button" aria-label="Grid" className="mr-1">
            <svg width="10" height="16" viewBox="0 0 10 16" fill="none" stroke="#666" aria-hidden="true">
              <path d="M.5 .5H3.5V6.5H.5ZM6.5 .5H9.5V6.5H6.5ZM.5 9.5H3.5V15.5H.5ZM6.5 9.5H9.5V15.5H6.5Z" />
            </svg>
          </button>
          <button type="button" aria-label="Phone">
            <svg width="17" height="16" viewBox="0 0 17 16" fill="none" stroke="#5f5f5f" aria-hidden="true">
              <rect x=".5" y=".5" width="8" height="15" rx="1" />
              <path d="M.5 13.5H8.5" strokeWidth="2" />
              <path d="M10 7.5H16.5V15.5H10" />
            </svg>
          </button>
          <button type="button" aria-label="Tablet">
            <svg width="16" height="16" viewBox="0 0 16 16" fill="none" stroke="#5f5f5f" aria-hidden="true">
              <path d="M7 15.5H.5V.5H11.5V3M.5 13H7" />
              <rect x="8.5" y="4.5" width="7" height="11" rx=".8" />
              <path d="M8.5 13.5H15.5" />
            </svg>
          </button>
        </div>
      </div>
      <div className="flex h-[39px] items-center border-t border-[#b5b5b5] bg-linear-to-r from-[#f4f4f4] to-[#dedede] pl-[10px] pr-2 font-bold text-[#555]">
        <svg width="7" height="9" viewBox="0 0 7 9" aria-hidden="true">
          <path d="M0 0L7 4.5L0 9Z" fill="#777" />
        </svg>
        <span className="pl-[7px]">Pin</span>
        <div className="ml-auto flex items-center">
          <button type="button" aria-label="Pin edges">
            <svg width="25" height="29" viewBox="0 0 25 29" fill="#f2f2f2" stroke="#a5a5a5" aria-hidden="true">
              <rect x="3.5" y="3.5" width="18" height="22" fill="none" />
              <g stroke="#444">
                <circle cx="12.5" cy="3.7" r="3.2" />
                <circle cx="12.5" cy="25.3" r="3.2" />
                <circle cx="3.7" cy="14.5" r="3.2" />
                <circle cx="21.3" cy="14.5" r="3.2" />
              </g>
            </svg>
          </button>
          <button type="button" aria-label="Centre horizontally" className="ml-[10px]">
            <svg width="19" height="23" viewBox="0 0 19 23" fill="none" stroke="#a5a5a5" aria-hidden="true">
              <path d="M.5 .5H18.5V22.5H.5ZM9.5 .5V22.5" />
              <circle cx="9.5" cy="11.5" r="3.2" fill="#eee" stroke="#444" />
            </svg>
          </button>
          <button type="button" aria-label="Centre vertically" className="ml-3">
            <svg width="19" height="23" viewBox="0 0 19 23" fill="none" stroke="#a5a5a5" aria-hidden="true">
              <path d="M.5 .5H18.5V22.5H.5ZM.5 11.5H18.5" />
              <circle cx="9.5" cy="11.5" r="3.2" fill="#eee" stroke="#444" />
            </svg>
          </button>
          <button type="button" aria-label="Remove pins" className="ml-[14px]">
            <svg width="9" height="12" viewBox="0 0 9 12" fill="none" stroke="#a0a0a0" aria-hidden="true">
              <path d="M0 2.5H9M3 2V.5H6V2M1.2 3V11.5H7.8V3M3.2 4.5V10M5.8 4.5V10" />
            </svg>
          </button>
        </div>
      </div>
    </>
  );
}

function Inspector() {
  return (
    <aside className="flex w-[213px] shrink-0 flex-col bg-[#e5e5e5] text-[11px] text-black">
      <AlignBar />
      <div className="flex flex-col gap-[2px] pb-1 pt-2">
        {[
          ["Position", ["X", "23"], ["Y", "101"]],
          ["Size", ["Width", "89"], ["Height", "24"]],
        ].map(([name, a, b]) => (
          <div key={name} className={`${rowCls} items-start`}>
            <span className="leading-5">{name}</span>
            <div className="flex w-[134px] justify-between">
              <Field label={a[0]} value={a[1]} className="w-[59px]" />
              <Field label={b[0]} value={b[1]} className="w-[59px]" />
            </div>
          </div>
        ))}
        <div className={`${rowCls} items-start`}>
          <span className="leading-5">Transform</span>
          <div className="flex w-[134px] justify-between">
            <Field label="Rotate" value="0º" className="w-[59px]" />
            <div className="flex w-[59px] flex-col items-center">
              <div className="grid h-[19px] w-full grid-cols-2 divide-x divide-[#dcdcdc] rounded-[4px] border border-[#bcbcbc] bg-white">
                <button type="button" aria-label="Flip horizontally" className="flex items-center justify-center">
                  <svg width="13" height="11" viewBox="0 0 13 11" aria-hidden="true">
                    <path d="M5.6 0V11H0Z" fill="#bdbdbd" />
                    <path d="M7.4 0V11H13Z" fill="#222" />
                  </svg>
                </button>
                <button type="button" aria-label="Flip vertically" className="flex items-center justify-center">
                  <svg width="12" height="13" viewBox="0 0 12 13" aria-hidden="true">
                    <path d="M1 0V5.4H11Z" fill="#bdbdbd" />
                    <path d="M1 13V7.6H11Z" fill="#222" />
                  </svg>
                </button>
              </div>
              <span className="text-[9px] leading-[14px]">Flip</span>
            </div>
          </div>
        </div>
      </div>
      <div className={fade} />
      <div className={`${rowCls} h-[38px] items-center`}>
        <label htmlFor="resizing">Resizing</label>
        <Picker id="resizing" value="Stretch" />
      </div>
      <button type="button" className="flex h-[38px] items-center justify-between border-y border-[#c4c4c4] bg-white pl-[10px] pr-[10px] text-[19px] font-bold text-[#00acdf]">
        <span className="pt-[6px]">Nav On</span>
        <UpDown color="#333" />
      </button>
      <TypePanel />
      <div className={fade} />
      <div className={`${rowCls} mt-2 items-center`}>
        <label htmlFor="opacity">Opacity</label>
        <div className="flex w-[134px] items-center justify-between">
          <input
            id="opacity"
            type="range"
            defaultValue="100"
            className="h-3 w-[81px] appearance-none bg-transparent [&::-webkit-slider-runnable-track]:h-[3px] [&::-webkit-slider-runnable-track]:rounded-full [&::-webkit-slider-runnable-track]:bg-[#8b8b8f] [&::-webkit-slider-thumb]:-mt-[5px] [&::-webkit-slider-thumb]:size-3 [&::-webkit-slider-thumb]:appearance-none [&::-webkit-slider-thumb]:rounded-full [&::-webkit-slider-thumb]:border [&::-webkit-slider-thumb]:border-[#a9a9a9] [&::-webkit-slider-thumb]:bg-white"
          />
          <input type="text" aria-label="Opacity value" defaultValue="100%" className="h-[19px] w-[43px] border border-[#b8b8b8] bg-white pl-[3px] text-[11px] text-[#222]" />
        </div>
      </div>
      <div className={`${rowCls} mb-2 mt-2 items-center`}>
        <label htmlFor="blending">Blending</label>
        <Picker id="blending" value="Normal" />
      </div>
      {["Fills", "Borders", "Shadows", "Inner Shadows"].map((s) => (
        <div key={s}>
          <div className={fade} />
          <div className="flex h-[25px] items-center justify-between pl-[7px] pr-[9px] font-bold text-[#555]">
            <span>{s}</span>
            <button type="button" aria-label={`Add ${s}`}>
              <Plus />
            </button>
          </div>
        </div>
      ))}
      <div className={fade} />
      <label className="flex h-[25px] items-center gap-[6px] pl-[7px] pr-[9px] font-bold text-[#555]">
        Gaussian Blur
        <UpDown color="#555" />
        <input type="checkbox" className="ml-auto size-3 appearance-none rounded-[3px] border border-[#a9a9a9] bg-white" />
      </label>
      <div className={fade} />

      <div className="mt-auto">
        <div className="flex h-[25px] items-center border-t border-[#b5b5b5] bg-white pl-[6px] pr-[10px] font-bold text-[#555]">
          <svg width="16" height="16" viewBox="0 0 16 16" aria-hidden="true">
            <path d="M4 0H15A1 1 0 0 1 16 1V12L12 16H2L0 14V4Z" fill="#2b0ae6" />
            <path d="M4.8 1.2H14.8V11.2H4.8Z" fill="#fff" />
            <path d="M6.4 3H13V9.6H6.4Z" fill="#2b0ae6" />
          </svg>
          <span className="grow pl-[7px]">Anima</span>
          <button type="button" aria-label="Anima settings">
            <Gear color="#a0a0a0" size={12} />
          </button>
        </div>
        <div className="flex h-[25px] items-center border-t border-[#b5b5b5] bg-[#f5f5f5] pl-[7px] font-bold text-[#555]">
          <svg width="15" height="15" viewBox="0 0 15 15" aria-hidden="true">
            <path d="M14.8 .2C10 0 6.4 2.2 4.6 4.8L1.6 5.4L0 8.6L3 8.2L6.8 12L6.4 15L9.6 13.4L10.2 10.4C12.8 8.6 15 5 14.8 .2ZM2.8 10L.2 14.8L5 12.2Z" fill="#4d4d4d" />
            <circle cx="10.2" cy="4.8" r="1.5" fill="#f5f5f5" />
          </svg>
          <span className="pl-[7px]">Launchpad</span>
        </div>
        <PluginIcons />
        <div className="flex h-8 items-center justify-between border-t border-[#b5b5b5] bg-linear-to-b from-[#fafafa] to-[#ececec] pl-[7px] pr-[9px] font-bold text-[#555]">
          <span>Make Exportable</span>
          <button type="button" aria-label="Make exportable">
            <Plus />
          </button>
        </div>
      </div>
    </aside>
  );
}

export default function App() {
  return (
    <div className="flex min-h-screen flex-col bg-[#fefefe] px-14 pb-20 pt-[31px] font-['Inter',sans-serif] leading-normal">
      <svg width="0" height="0" className="absolute" aria-hidden="true">
        <defs>
          <linearGradient id="lime" x1="0" y1="0" x2="0" y2="1">
            <stop offset="0" stopColor="#aee200" />
            <stop offset="1" stopColor="#6cc800" />
          </linearGradient>
          <linearGradient id="magenta" x1="0" y1="0" x2="0" y2="1">
            <stop offset="0" stopColor="#dc3ef0" />
            <stop offset="1" stopColor="#b117d0" />
          </linearGradient>
          <linearGradient id="lens" x1="0" y1="0" x2="0" y2="1">
            <stop offset="0" stopColor="#f4f7fa" />
            <stop offset="1" stopColor="#cddbe9" />
          </linearGradient>
        </defs>
      </svg>
      <div className="flex grow flex-col overflow-hidden rounded-[5px] shadow-[0_0_1px_rgba(0,0,0,0.5),0_22px_36px_rgba(0,0,0,0.55)]">
        <Toolbar />
        <div className="flex grow">
          <LeftPanel />
          <div className="flex min-w-0 grow flex-col">
            <TopRuler />
            <div className="flex grow">
              <SideRuler />
              <Canvas />
            </div>
          </div>
          <Strip />
          <Inspector />
        </div>
      </div>
    </div>
  );
}
